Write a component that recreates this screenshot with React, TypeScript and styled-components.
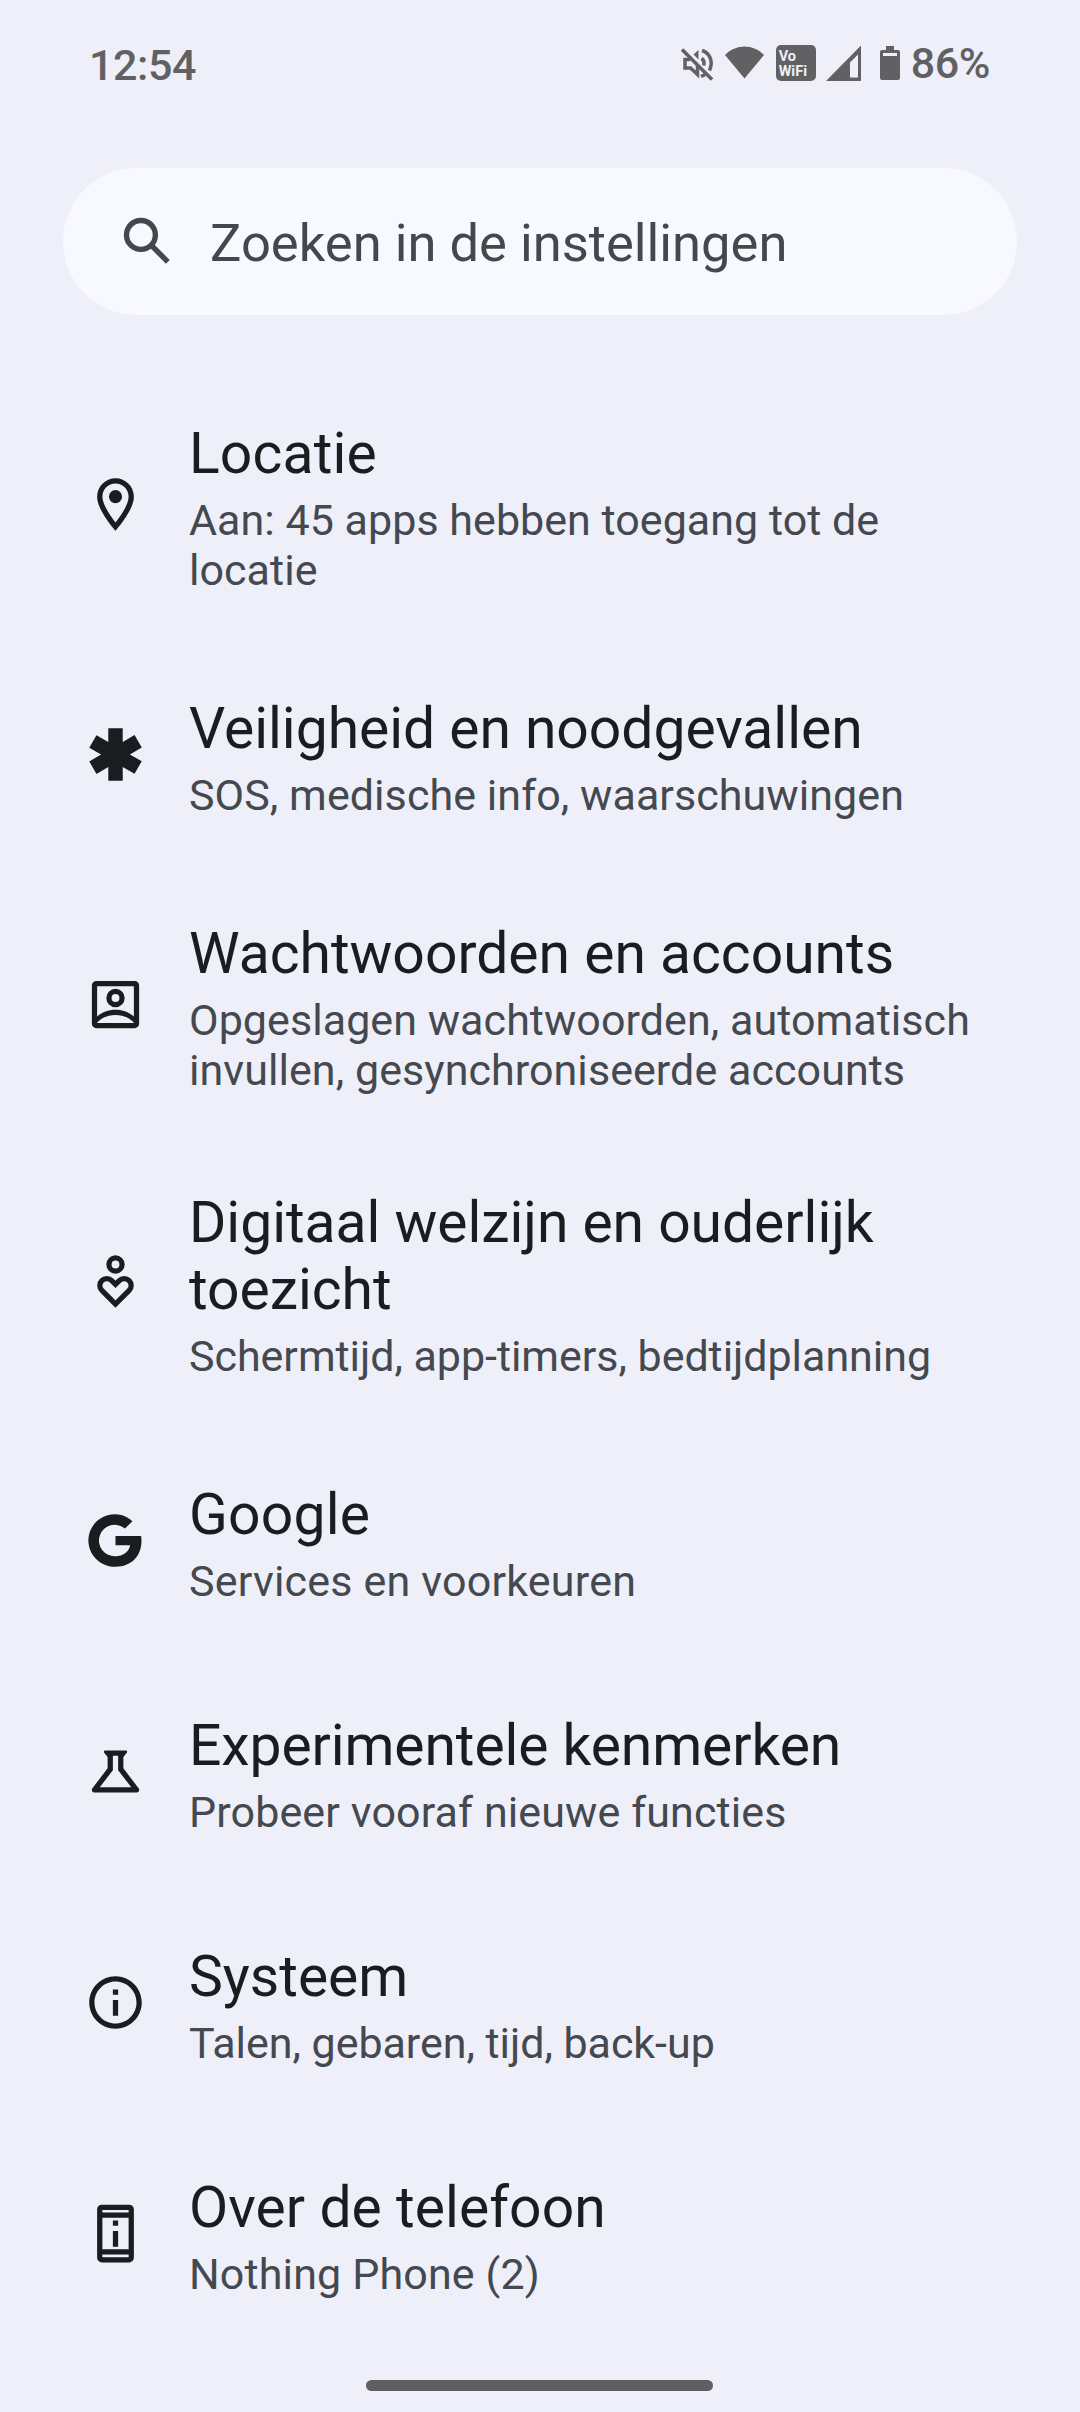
import React from 'react';
import styled, { createGlobalStyle } from 'styled-components';

const GlobalStyle = createGlobalStyle`
  * { box-sizing: border-box; }
  html, body { margin: 0; background: #eeeff8; }
  body { font-family: Roboto, "Noto Sans", sans-serif; }
`;

const Screen = styled.div`
  width: 1080px;
  height: 2412px;
  background: #eeeff8;
  display: flex;
  flex-direction: column;
  overflow: hidden;
`;

const StatusBar = styled.header`
  height: 168px;
  flex: none;
  padding: 38px 90px 0 89px;
  display: flex;
  justify-content: space-between;
  align-items: flex-start;
  color: #616163;
`;

const Clock = styled.span`
  font-size: 43px;
  font-weight: 500;
  line-height: 54px;
  letter-spacing: -0.4px;
`;

const StatusIcons = styled.div`
  display: flex;
  align-items: flex-start;
`;

const StatusGlyph = styled.svg<{ $gap: number }>`
  display: block;
  height: 50px;
  margin-right: ${(p) => p.$gap}px;
  flex: none;
  fill: currentColor;
`;

const Badge = styled.span`
  width: 40px;
  height: 36px;
  margin: 7px 10px 0 0;
  padding: 4px 0 0 3px;
  border-radius: 5px;
  background: #616163;
  color: #eeeff8;
  font-size: 14.5px;
  font-weight: 700;
  line-height: 15px;
  white-space: pre;
`;

const Percent = styled.span`
  font-size: 43px;
  font-weight: 500;
  line-height: 50px;
  letter-spacing: -0.4px;
`;

const SearchBar = styled.div`
  height: 147px;
  flex: none;
  margin: 0 63px;
  padding-left: 53px;
  border-radius: 74px;
  background: #f8f9fe;
  color: #44484d;
  display: flex;
  align-items: center;
  gap: 31px;
`;

const Placeholder = styled.span`
  padding-top: 2px;
  font-size: 52.5px;
  line-height: 62px;
`;

const Icon = styled.svg`
  display: block;
  width: 63px;
  height: 63px;
  flex: none;
  fill: currentColor;
`;

const List = styled.main`
  flex: 1;
  margin-top: 58px;
`;

const Row = styled.section`
  min-height: 231px;
  padding: 47px 84px;
  display: flex;
  align-items: center;
  gap: 42px;
  color: #1a1c20;
  & > svg { margin-bottom: 7px; }
`;

const Title = styled.h2<{ $tracking: number }>`
  margin: 0 0 8px;
  font-size: 57px;
  font-weight: 400;
  line-height: 67px;
  letter-spacing: ${(p) => p.$tracking}px;
  white-space: pre-line;
`;

const Summary = styled.p<{ $tracking: number }>`
  margin: 0;
  color: #44484f;
  font-size: 43px;
  line-height: 50px;
  letter-spacing: ${(p) => p.$tracking}px;
  white-space: pre-line;
`;

const Handle = styled.footer`
  height: 11px;
  width: 347px;
  flex: none;
  margin: 0 0 21px 366px;
  border-radius: 6px;
  background: #5f5f61;
`;

const icons = {
  pin: (
    <>
      <path fillRule="evenodd" d="M12 2C8.13 2 5 5.13 5 9c0 5.25 7 13 7 13s7-7.75 7-13c0-3.87-3.13-7-7-7zM7 9c0-2.76 2.24-5 5-5s5 2.24 5 5c0 2.88-2.88 7.19-5 9.88C9.92 16.21 7 11.85 7 9z" />
      <circle cx="12" cy="9" r="2.5" />
    </>
  ),
  medical: <path d="M14.75 2v5.2l4.5-2.6 2.75 4.76-4.5 2.6 4.5 2.6-2.75 4.76-4.5-2.6V22h-5.5v-5.2l-4.5 2.6L2 14.64l4.5-2.6L2 9.44l2.75-4.76 4.5 2.6V2z" />,
  account: (
    <>
      <path fillRule="evenodd" d="M4.7 3h14.6A1.7 1.7 0 0 1 21 4.7v14.6a1.7 1.7 0 0 1-1.7 1.7H4.7A1.7 1.7 0 0 1 3 19.3V4.7A1.7 1.7 0 0 1 4.7 3zM5 5v11.6C6.8 15 9.3 14 12 14s5.2 1 7 2.6V5zM5 19h14v-.1c-1.6-1.8-4.2-2.9-7-2.9s-5.4 1.1-7 2.9V19z" />
      <path fillRule="evenodd" d="M12 6a3.5 3.5 0 1 0 0 7 3.5 3.5 0 0 0 0-7zm0 2a1.5 1.5 0 1 1 0 3 1.5 1.5 0 0 1 0-3z" />
    </>
  ),
  wellbeing: (
    <g fill="none" stroke="currentColor" strokeWidth="2">
      <circle cx="12" cy="5.5" r="2.5" />
      <path d="M12 20.6l-5.2-5.2a2.65 2.65 0 0 1 3.75-3.75L12 13.1l1.45-1.45a2.65 2.65 0 0 1 3.75 3.75z" />
    </g>
  ),
  google: <path d="M12 10.3h9.75c.1.6.15 1.2.15 1.8C21.9 18 18 22 12 22A10 10 0 1 1 18.45 4.65L15.6 7.45A6 6 0 1 0 12 18c2.85 0 5-1.5 5.6-4.15H12z" />,
  flask: <path fillRule="evenodd" d="M8.1 4h7.8c.5 0 .7.5.4.9L15 6.5v4.3l5.8 7.6c.5.7.1 1.6-.7 1.6H3.9c-.8 0-1.2-.9-.7-1.6L9 10.8V6.5L7.7 4.9c-.3-.4-.1-.9.4-.9zM11 6v5.5L6 18h12l-5-6.5V6z" />,
  info: <path d="M11 7h2v2h-2zm0 4h2v6h-2zm1-9C6.48 2 2 6.48 2 12s4.48 10 10 10 10-4.48 10-10S17.52 2 12 2zm0 18c-4.41 0-8-3.59-8-8s3.59-8 8-8 8 3.59 8 8-3.59 8-8 8z" />,
  phone: <path fillRule="evenodd" d="M11 7h2v2h-2zM11 11h2v6h-2zM6.8 1h10.4a1.8 1.8 0 0 1 1.8 1.8v18.4a1.8 1.8 0 0 1-1.8 1.8H6.8A1.8 1.8 0 0 1 5 21.2V2.8A1.8 1.8 0 0 1 6.8 1zM7 3v1h10V3zM7 6v12h10V6zM7 20v1h10v-1z" />,
};

type Item = {
  icon: keyof typeof icons;
  title: string;
  summary: string;
  /** Letter spacing of the title and of the summary, in pixels. */
  tracking: [number, number];
};

const items: Item[] = [
  { icon: 'pin', title: 'Locatie', summary: 'Aan: 45 apps hebben toegang tot de\nlocatie', tracking: [0.15, 0.04] },
  { icon: 'medical', title: 'Veiligheid en noodgevallen', summary: 'SOS, medische info, waarschuwingen', tracking: [-0.04, 0.07] },
  { icon: 'account', title: 'Wachtwoorden en accounts', summary: 'Opgeslagen wachtwoorden, automatisch\ninvullen, gesynchroniseerde accounts', tracking: [0, 0.06] },
  { icon: 'wellbeing', title: 'Digitaal welzijn en ouderlijk\ntoezicht', summary: 'Schermtijd, app-timers, bedtijdplanning', tracking: [-0.04, -0.04] },
  { icon: 'google', title: 'Google', summary: 'Services en voorkeuren', tracking: [0.2, 0.2] },
  { icon: 'flask', title: 'Experimentele kenmerken', summary: 'Probeer vooraf nieuwe functies', tracking: [-0.1, 0.12] },
  { icon: 'info', title: 'Systeem', summary: 'Talen, gebaren, tijd, back-up', tracking: [0, -0.04] },
  { icon: 'phone', title: 'Over de telefoon', summary: 'Nothing Phone (2)', tracking: [0.05, 0.15] },
];

export default function App() {
  return (
    <>
      <GlobalStyle />
      <Screen>
        <StatusBar>
          <Clock>12:54</Clock>
          <StatusIcons>
            <StatusGlyph $gap={12} width="32" viewBox="0 0 32 50">
              <g fill="none" stroke="currentColor" strokeWidth="3.5">
                <path d="M1 11.5L31 41.5" />
                <path d="M9 21.5H4v8.5H9.5l7 6.5V27" />
                <path d="M20.5 20.5c2.5 1.5 3 4 2 7M21 12.5c8 2.5 11.5 11 7.5 20M20 38.5l4-1.8" />
              </g>
              <path d="M17.5 12v9.5L12.5 16.5z" />
            </StatusGlyph>
            <StatusGlyph $gap={12} width="39" viewBox="0 0 39 50">
              <path d="M0 17C11 5.5 28 5.5 39 17L19.5 40.5z" />
            </StatusGlyph>
            <Badge>{'Vo\nWiFi'}</Badge>
            <StatusGlyph $gap={19} width="35" viewBox="0 0 35 50">
              <path fillRule="evenodd" d="M35 7.5V43H0zM32 16.5l-8 8V39.5h8z" />
            </StatusGlyph>
            <StatusGlyph $gap={11} width="20" viewBox="0 0 20 50">
              <path fillRule="evenodd" d="M6 8h8v4h4a2 2 0 0 1 2 2v26a2 2 0 0 1-2 2H2a2 2 0 0 1-2-2V14a2 2 0 0 1 2-2h4zM3 15v3h14v-3z" />
            </StatusGlyph>
            <Percent>86%</Percent>
          </StatusIcons>
        </StatusBar>
        <SearchBar>
          <Icon viewBox="0 0 24 24">
            <g fill="none" stroke="currentColor" strokeWidth="2.05">
              <circle cx="9.5" cy="9.5" r="5.5" />
              <path d="M13.3 13.3l6.45 6.45" />
            </g>
          </Icon>
          <Placeholder>Zoeken in de instellingen</Placeholder>
        </SearchBar>
        <List>
          {items.map((item) => (
            <Row key={item.title}>
              <Icon viewBox="0 0 24 24">{icons[item.icon]}</Icon>
              <div>
                <Title $tracking={item.tracking[0]}>{item.title}</Title>
                <Summary $tracking={item.tracking[1]}>{item.summary}</Summary>
              </div>
            </Row>
          ))}
        </List>
        <Handle />
      </Screen>
    </>
  );
}
